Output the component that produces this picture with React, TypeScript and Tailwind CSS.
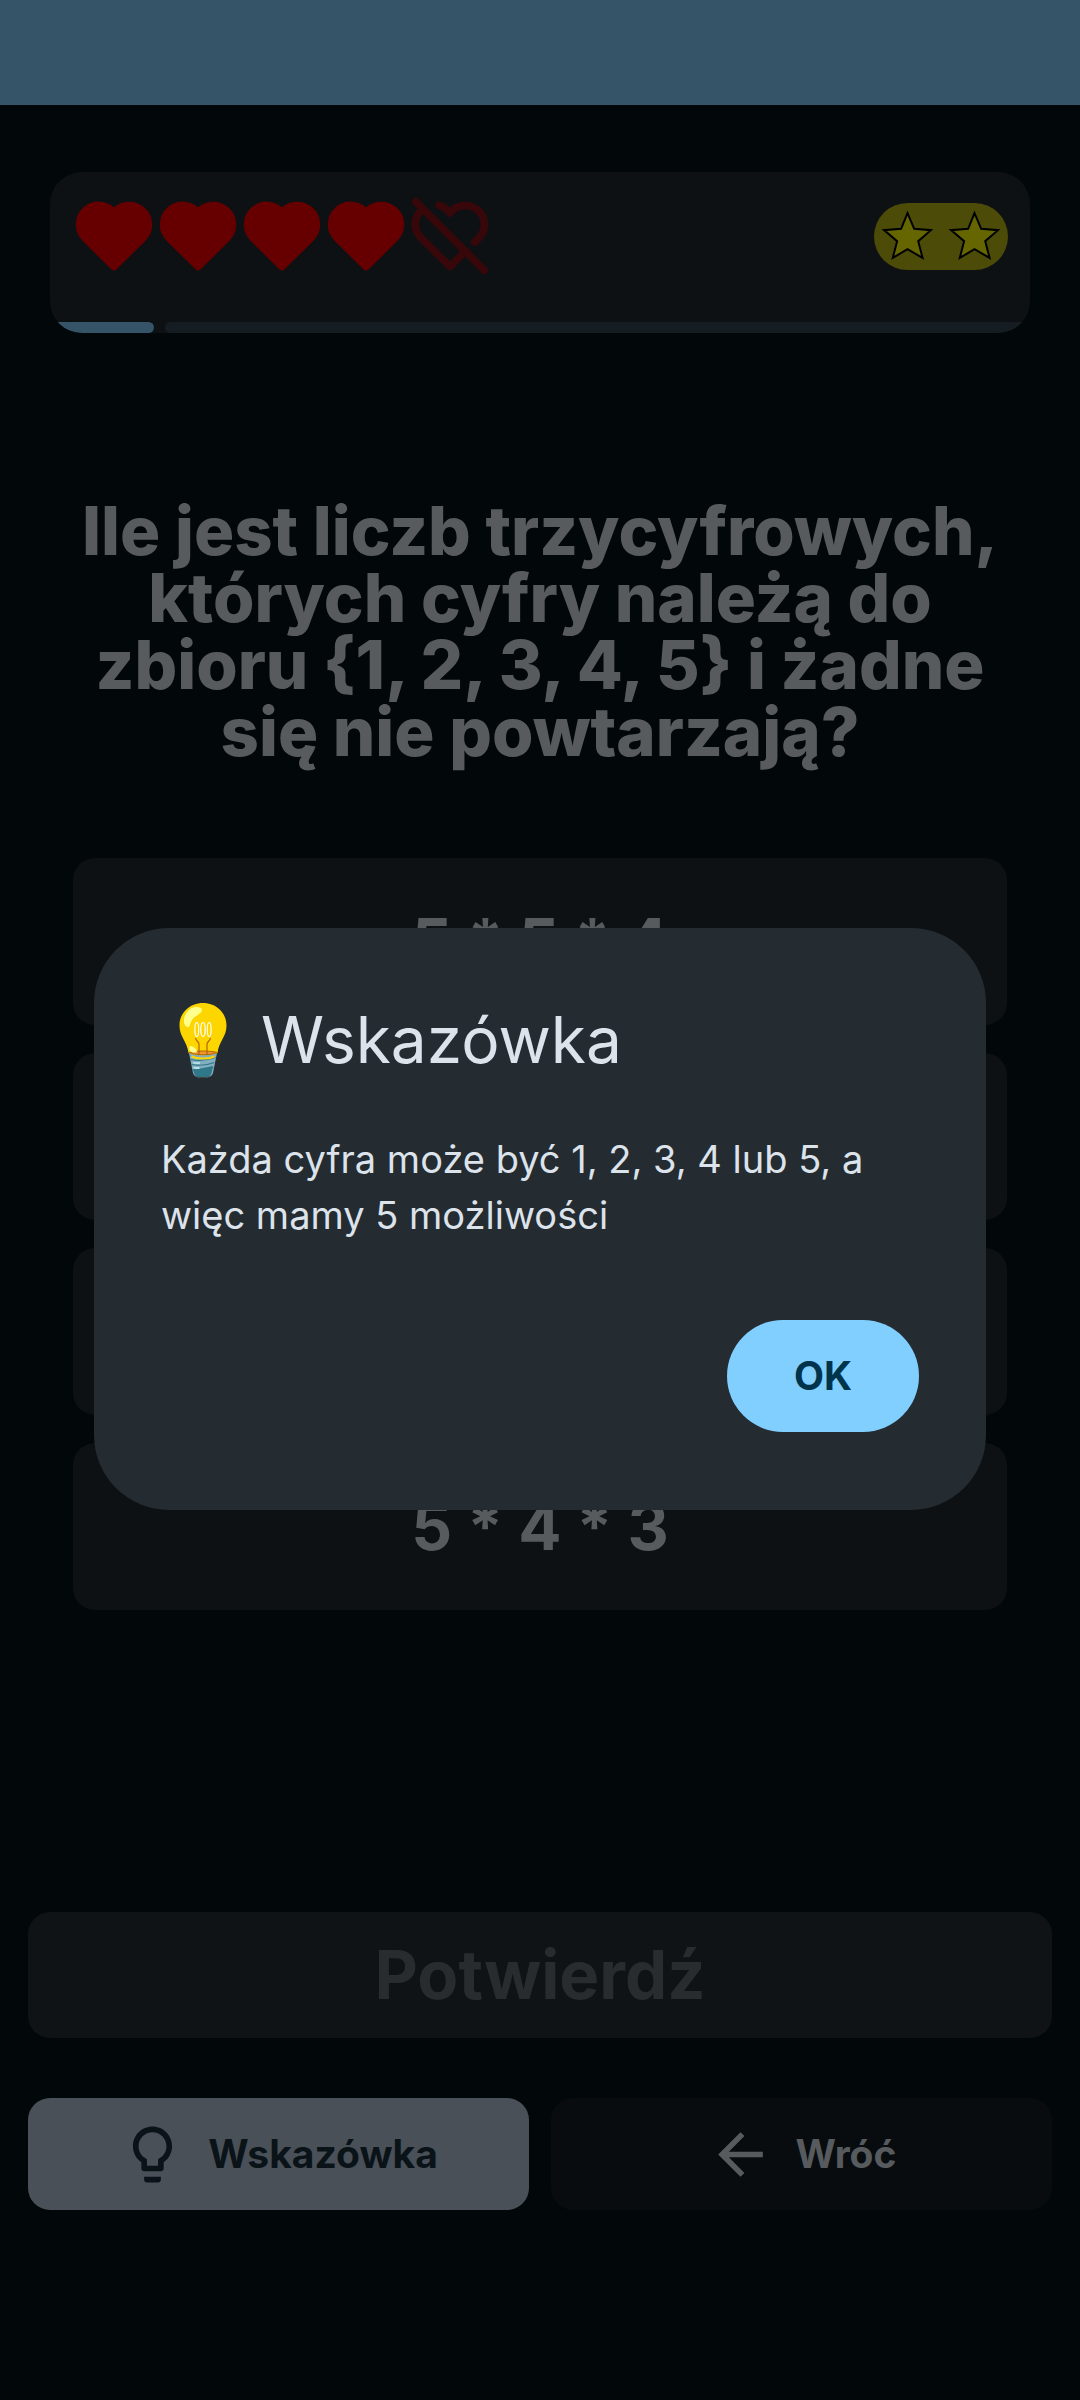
import React from "react";

const answers = ["5 * 5 * 4", "", "", "5 * 4 * 3"];

function Heart() {
  return (
    <svg viewBox="1 1 22 22" className="size-[84px]" fill="#660000" stroke="#660000" strokeWidth="2" strokeLinecap="round" strokeLinejoin="round" aria-hidden="true">
      <path d="M19.5 12.572 12 20 4.5 12.572A5 5 0 1 1 12 6.006a5 5 0 1 1 7.5 6.572" />
    </svg>
  );
}

function HeartOff() {
  return (
    <svg viewBox="1 1 22 22" className="size-[84px]" fill="none" stroke="#38070a" strokeWidth="2" strokeLinecap="round" strokeLinejoin="round" aria-hidden="true">
      <path d="m3 3 18 18" />
      <path d="M4.7 5.1a5 5 0 0 0-.2 7.47L12 20l4-4" />
      <path d="M9.1 3.9c1.1.3 2.1 1 2.9 2.1a5 5 0 1 1 7.5 6.572L18.5 13.6" />
    </svg>
  );
}

function Star() {
  return (
    <svg viewBox="0 0 200 200" className="size-[67px]" fill="#666600" stroke="#000000" strokeWidth="6" aria-hidden="true">
      <path d="M100 30 120 77 170 81 132 114 145 164 100 138 56 164 69 114 30 81 81 77Z" />
    </svg>
  );
}

function BulbPicture() {
  return (
    <svg viewBox="0 0 48 75" className="h-[75px] w-[48px]" fill="none" aria-hidden="true">
      <path d="M10 50h28l-4 20c-.5 3-5 5-10 5s-9.500-2-10-5Z" fill="#82aec0" />
      <path d="m14 67 20-4-1.500 7.500c-1 3-4 4.500-8.500 4.500s-8-1.500-8.800-4.500Z" fill="#2f7889" />
      <path d="M17 73.200c4 1 10 1 14 0-2 2.400-12 2.400-14 0Z" fill="#424242" />
      <path d="m11.500 56.500c8 1.500 17 1 25-2M12.500 61.500c8 1.500 15 1 23-2M13.500 66.500c7 1 14 .5 21-2" stroke="#2f7889" strokeWidth="1.200" />
      <path d="M14 59.500c2 .6 5 .6 7 .3M14.500 64.500c2 .6 4 .6 6 .3" stroke="#b9e4ea" strokeWidth="1.800" />
      <path d="M24 0C11 0 .500 9.500.500 22.500.500 34 8 38 9.500 50c6 3 23 3 29 0C40 38 47.500 34 47.500 22.500 47.500 9.500 37 0 24 0Z" fill="#fdd600" />
      <path d="M10 49.500c7-2 21-2 28 0-6 3-22 3-28 0Z" fill="#f19534" stroke="#b26500" strokeWidth="1" />
      <path d="M12.500 53.500c6 2.800 17 2.800 23 0" stroke="#fdd600" strokeWidth="2" />
      <path d="M20 52V41c0-2-3-3-3.500-6M28 52V41c0-2 3-3 3.500-6" stroke="#b26500" strokeWidth="1.200" />
      <ellipse cx="17.800" cy="26.500" rx="1.900" ry="7" stroke="#fff" strokeWidth="1.200" />
      <ellipse cx="24" cy="26.500" rx="2.200" ry="7" stroke="#fff" strokeWidth="1.200" />
      <ellipse cx="30.200" cy="26.500" rx="1.900" ry="7" stroke="#fff" strokeWidth="1.200" />
      <path d="M8 24C3 22 4 11 11 6c5-3.500 12-2 12 1 0 4-7 5-10 10-2 3-2 8-5 7Z" fill="#ffff8d" />
      <path d="M11 43c3 0 7 3 7 6-3 1-6 .5-7-1-.8-2-1-5 0-5Z" fill="#ffff8d" />
    </svg>
  );
}

function BulbIcon() {
  return (
    <svg viewBox="0 0 24 24" className="size-[67px]" fill="currentColor" aria-hidden="true">
      <path d="M9 21c0 .55.45 1 1 1h4c.55 0 1-.45 1-1v-1H9v1zm3-19C8.140 2 5 5.140 5 9c0 2.380 1.190 4.470 3 5.740V17c0 .55.45 1 1 1h6c.55 0 1-.45 1-1v-2.260c1.810-1.270 3-3.360 3-5.740 0-3.860-3.140-7-7-7zm2.850 11.100-.85.6V16h-4v-2.300l-.85-.6C7.800 12.160 7 10.630 7 9c0-2.760 2.240-5 5-5s5 2.240 5 5c0 1.630-.8 3.160-2.150 4.100z" />
    </svg>
  );
}

function BackIcon() {
  return (
    <svg viewBox="0 0 24 24" className="size-[67px]" fill="currentColor" aria-hidden="true">
      <path d="M20 11H7.830l5.590-5.590L12 4l-8 8 8 8 1.410-1.410L7.830 13H20v-2z" />
    </svg>
  );
}

export default function App() {
  return (
    <div className="flex min-h-screen flex-col bg-[#020709] font-['Inter','Open_Sans',sans-serif] text-[#575b5e]">
      <div className="h-[105px] bg-[#355468]" />

      <header className="mx-[50px] mt-[67px] overflow-hidden rounded-[32px] bg-[#0d1114]">
        <div className="flex items-center justify-between px-[22px] pt-[22px] pb-[44px]">
          <div className="flex" role="img" aria-label="4 / 5">
            <Heart />
            <Heart />
            <Heart />
            <Heart />
            <HeartOff />
          </div>
          <div className="flex rounded-full bg-[#4d4b08]">
            <Star />
            <Star />
          </div>
        </div>
        <div className="flex h-[11px] gap-[11px]">
          <div className="w-[104px] rounded-r-full bg-[#355468]" />
          <div className="flex-1 rounded-l-full bg-[#151c22]" />
        </div>
      </header>

      <main className="mx-[73px] mt-[164px]">
        <h1 className="text-center text-[67px] leading-[67px] font-extrabold">
          Ile jest liczb trzycyfrowych,
          <br />
          których cyfry należą do
          <br />
          zbioru {"{1, 2, 3, 4, 5}"} i żadne
          <br />
          się nie powtarzają?
        </h1>
        <div className="mt-[93px] grid gap-[28px]">
          {answers.map((answer, i) => (
            <button
              key={i}
              type="button"
              aria-label={answer || `Odpowiedź ${i + 1}`}
              className="h-[167px] rounded-[22px] bg-[#0d1114] text-[64px] font-bold [font-feature-settings:'calt'_0]"
            >
              {answer}
            </button>
          ))}
        </div>
      </main>

      <footer className="mt-auto px-[28px] pb-[190px]">
        <button type="button" disabled className="h-[126px] w-full rounded-[22px] bg-[#0f1316] text-[67px] font-bold text-[#292c2f]">
          Potwierdź
        </button>
        <div className="mt-[60px] grid grid-cols-2 gap-[22px] text-[39px] font-bold">
          <button type="button" className="flex h-[112px] items-center justify-center gap-[22px] rounded-[22px] bg-[#495057] text-[#0a1318]">
            <BulbIcon />
            Wskazówka
          </button>
          <button type="button" className="flex h-[112px] items-center justify-center gap-[22px] rounded-[22px] bg-[#080c0f]">
            <BackIcon />
            Wróć
          </button>
        </div>
      </footer>

      <div className="fixed inset-0 flex items-center px-[94px] pt-[38px]">
        <div role="dialog" aria-modal="true" aria-labelledby="hint-title" className="w-full rounded-[75px] bg-[#242b31] px-[67px] pt-[67px] pb-[78px] text-[#dce3eb]">
          <h2 id="hint-title" className="flex items-center gap-[34px] pl-[18px] text-[64px] leading-[90px]">
            <BulbPicture />
            Wskazówka
          </h2>
          <p className="mt-[46px] text-[38px] leading-[56px]">
            Każda cyfra może być 1, 2, 3, 4 lub 5, a
            <br />
            więc mamy 5 możliwości
          </p>
          <div className="mt-[77px] flex justify-end">
            <button type="button" className="h-[112px] rounded-full bg-[#81cfff] px-[67px] text-[39px] font-bold text-[#00344d]">
              OK
            </button>
          </div>
        </div>
      </div>
    </div>
  );
}
